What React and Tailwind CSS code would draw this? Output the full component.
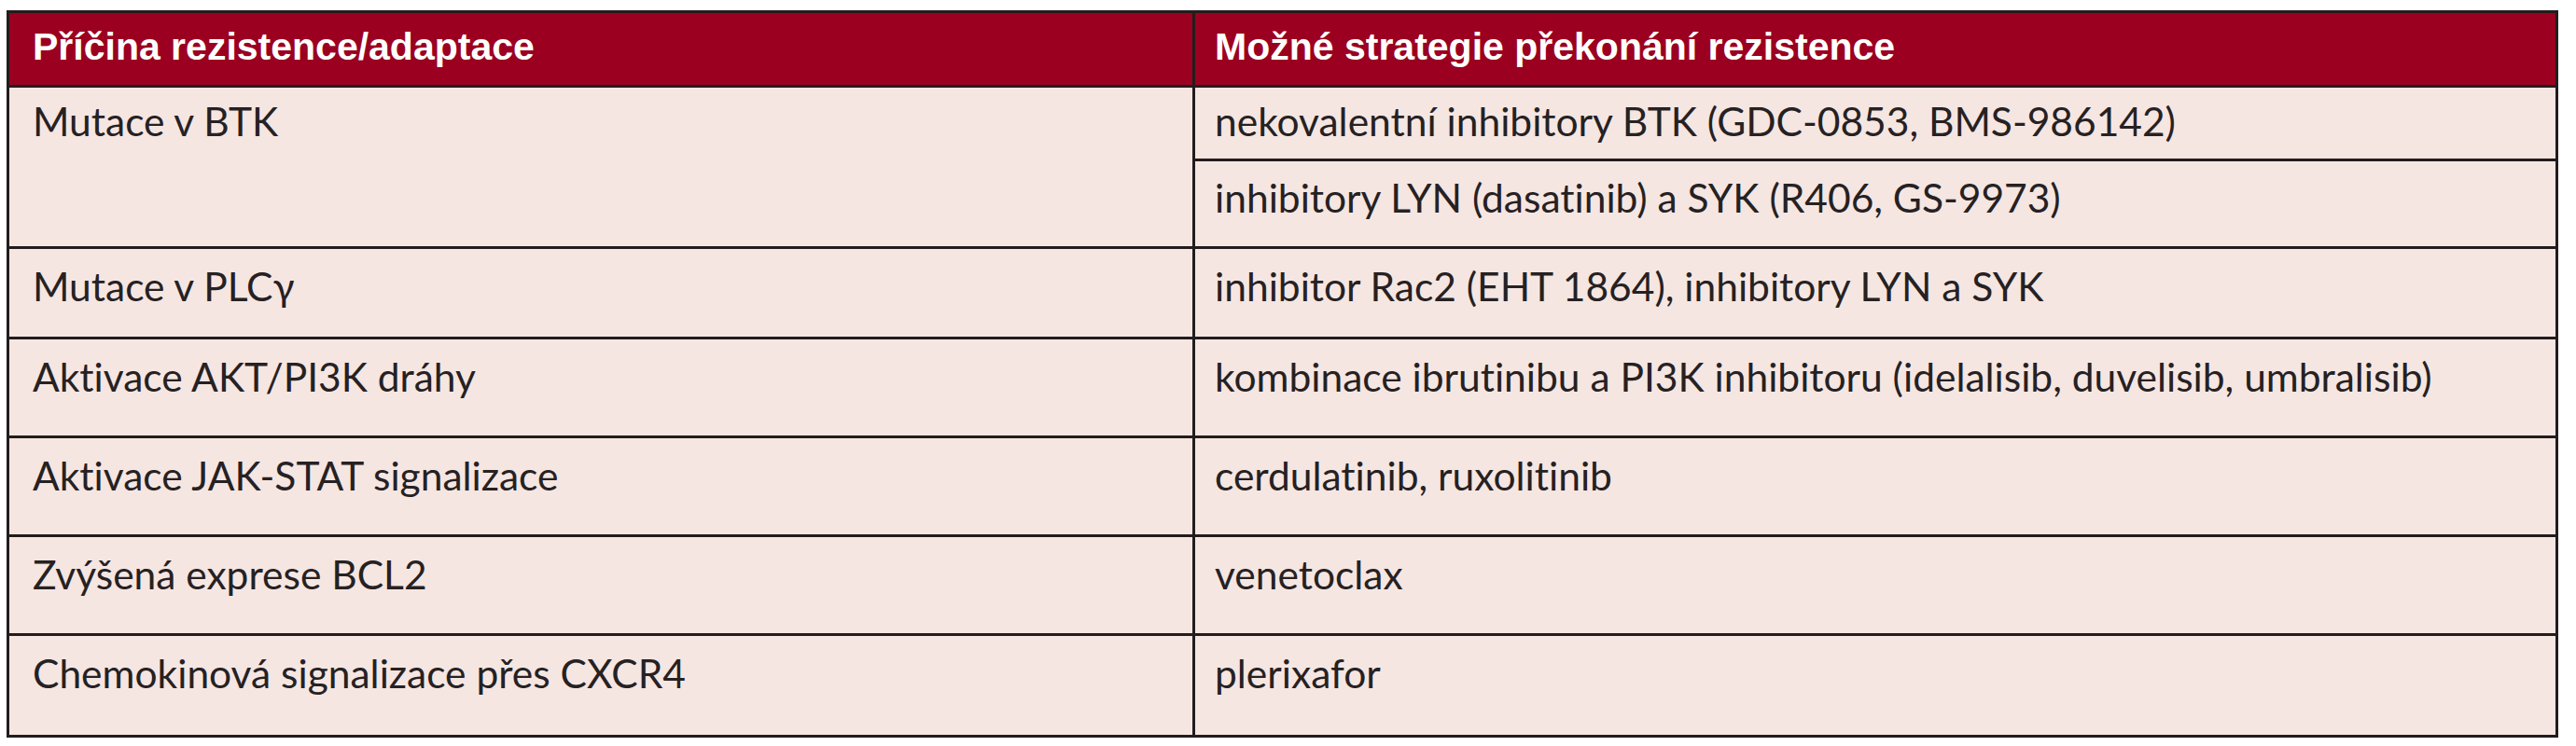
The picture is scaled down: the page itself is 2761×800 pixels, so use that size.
import React from 'react';

const rows = [
    { cause: 'Mutace v PLCγ', fix: 'inhibitor Rac2 (EHT 1864), inhibitory LYN a SYK', h: 'h-[97px]' },
    { cause: 'Aktivace AKT/PI3K dráhy', fix: 'kombinace ibrutinibu a PI3K inhibitoru (idelalisib, duvelisib, umbralisib)', h: 'h-[106px]' },
    { cause: 'Aktivace JAK-STAT signalizace', fix: 'cerdulatinib, ruxolitinib', h: 'h-[106px]' },
    { cause: 'Zvýšená exprese BCL2', fix: 'venetoclax', h: 'h-[106px]' },
    { cause: 'Chemokinová signalizace přes CXCR4', fix: 'plerixafor', h: 'h-[106px]', last: true },
];

const App = () => {
    return (
        <div className="bg-white w-[2761px] h-[800px] pt-[11px] pl-[7px]">
            <div className="w-[2735px] border-[3px] border-[#231c1d] bg-[#f5e6e2] text-[#262122] font-['Lato',sans-serif] text-[42.5px] leading-[1.2] [font-variant-ligatures:none]">
                {/* header */}
                <div className="flex h-[80px] bg-[#9b0020] border-b-[3px] border-[#231c1d] text-white font-bold font-['Liberation_Sans',Arial,sans-serif] text-[41px]">
                    <div className="w-[1268px] shrink-0 flex items-center pl-[25px] pb-[3px]">Příčina rezistence/adaptace</div>
                    <div className="flex-1 flex items-center pl-[21px] pb-[3px] border-l-[3px] border-[#231c1d]">Možné strategie překonání rezistence</div>
                </div>

                {/* BTK – two strategies */}
                <div className="flex border-b-[3px] border-[#231c1d]">
                    <div className="w-[1268px] shrink-0 pl-[25px] pt-[10px]">Mutace v BTK</div>
                    <div className="flex-1 flex flex-col border-l-[3px] border-[#231c1d]">
                        <div className="h-[79px] border-b-[3px] border-[#231c1d] pl-[21px] pt-[10px] whitespace-nowrap">
                            nekovalentní inhibitory BTK (GDC-0853, BMS-986142)
                        </div>
                        <div className="h-[91px] pl-[21px] pt-[13px] whitespace-nowrap">
                            inhibitory LYN (dasatinib) a SYK (R406, GS-9973)
                        </div>
                    </div>
                </div>

                {rows.map((r) => (
                    <div key={r.cause} className={`flex ${r.h} ${r.last ? '' : 'border-b-[3px] border-[#231c1d]'}`}>
                        <div className="w-[1268px] shrink-0 pl-[25px] pt-[14px] whitespace-nowrap">{r.cause}</div>
                        <div className="flex-1 pl-[21px] pt-[14px] border-l-[3px] border-[#231c1d] whitespace-nowrap">{r.fix}</div>
                    </div>
                ))}
            </div>
        </div>
    );
};

export default App;
